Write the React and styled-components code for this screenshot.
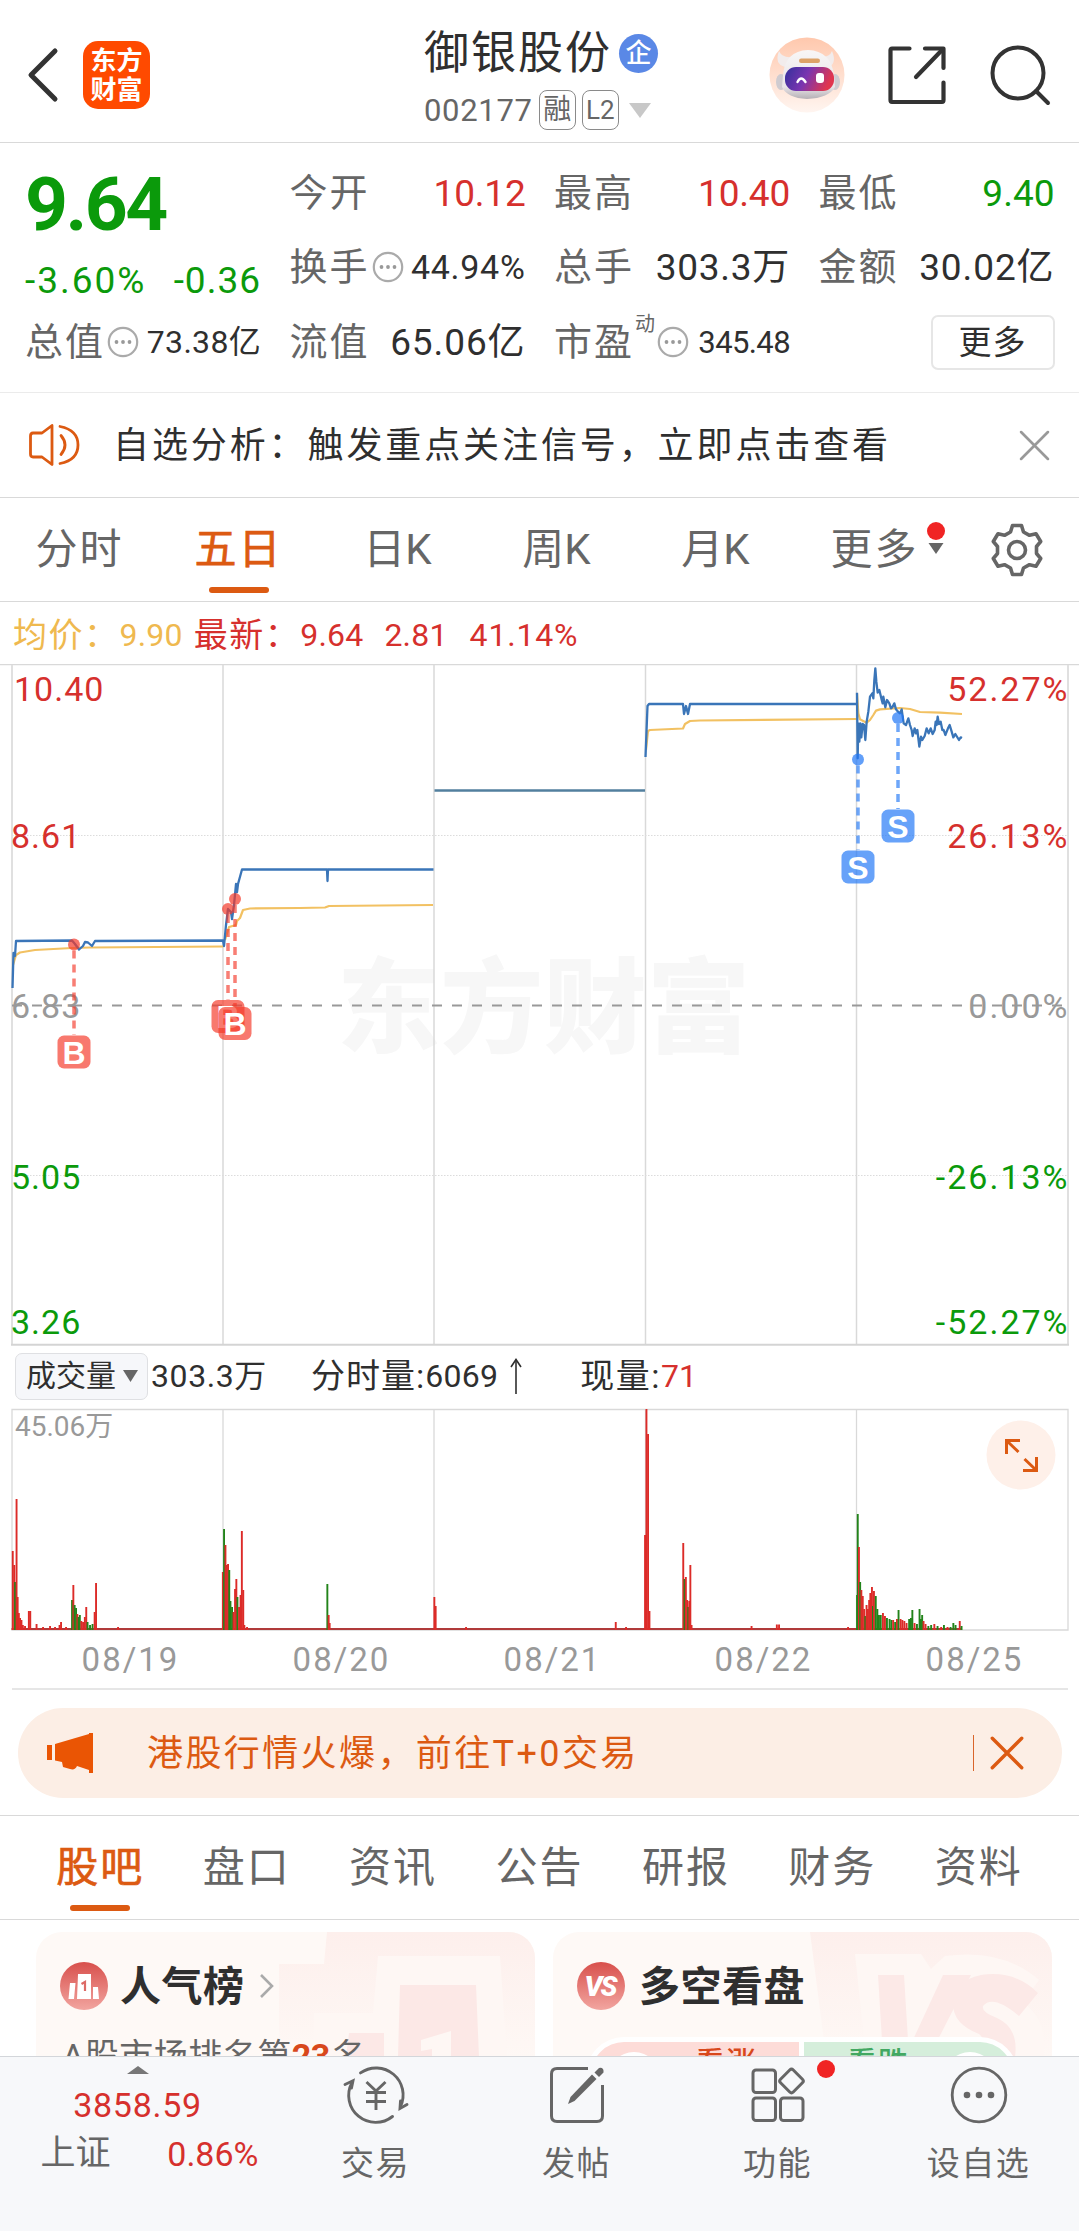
import React from "react";
import styled, { createGlobalStyle } from "styled-components";

const RED = "#d6302d";
const GREEN = "#0b9a0b";
const ORANGE = "#dc5a12";
const INK = "#2f2f2f";
const GRAY = "#666";
const LINE = "#d9d9d9";

const Global = createGlobalStyle`
  *, *::before, *::after { box-sizing: border-box; }
  body {
    margin: 0;
    background: #fff;
    font-family: Roboto, "Noto Sans CJK SC", sans-serif;
    color: ${INK};
  }
  svg { display: block; flex: none; }
`;

const Page = styled.div`
  display: flex;
  flex-direction: column;
  width: 1079px;
  height: 2231px;
  overflow: hidden;
  background: #fff;
`;

const Text = styled.span`
  font-size: ${(p) => p.$size || 36}px;
  line-height: 1;
  color: ${(p) => p.$color || INK};
  font-weight: ${(p) => p.$weight || 400};
  letter-spacing: ${(p) => p.$ls || 0}px;
  margin-left: ${(p) => p.$ml || 0}px;
  margin-top: ${(p) => p.$mt || 0}px;
  white-space: nowrap;
`;

/* ---------- header ---------- */
const Header = styled.header`
  display: grid;
  grid-template-columns: 424px 1fr auto;
  height: 143px;
  flex: none;
  border-bottom: 1px solid ${LINE};
`;
const HeaderLeft = styled.div`
  display: flex;
  align-items: center;
  gap: 24px;
  padding: 8px 0 0 27px;
`;
const Logo = styled.div`
  display: flex;
  flex-direction: column;
  align-items: center;
  justify-content: center;
  gap: 3px;
  width: 67px;
  height: 68px;
  border-radius: 15px;
  background: #ff4a00;
`;
const TitleBlock = styled.div`
  display: flex;
  flex-direction: column;
  gap: 12px;
  padding-top: 28px;
`;
const TitleRow = styled.div`
  display: flex;
  align-items: center;
  height: 50px;
`;
const CodeRow = styled.div`
  display: flex;
  align-items: center;
  gap: 6px;
  height: 40px;
`;
const CompanyBadge = styled.span`
  display: flex;
  align-items: center;
  justify-content: center;
  width: 39px;
  height: 39px;
  margin-left: 7px;
  border-radius: 50%;
  background: #5a88e6;
`;
const Tag = styled.span`
  display: flex;
  align-items: center;
  justify-content: center;
  width: 37px;
  height: 40px;
  border: 1.5px solid #8a8a8a;
  border-radius: 8px;
`;
const HeaderRight = styled.div`
  display: flex;
  align-items: center;
  gap: 42px;
  padding: 7px 28px 0 0;
`;

/* ---------- quote ---------- */
const Quote = styled.section`
  display: grid;
  grid-template-columns: repeat(4, 236px);
  grid-template-rows: 74px 74px 76px;
  column-gap: 28.5px;
  padding: 13px 0 0 25px;
  height: 250px;
  flex: none;
  border-bottom: 1px solid #ebebeb;
`;
const Cell = styled.div`
  display: flex;
  align-items: center;
  justify-content: space-between;
  padding-top: ${(p) => p.$drop || 0}px;
`;
const Label = styled.div`
  display: flex;
  align-items: center;
  gap: 2px;
`;
const Sup = styled.span`
  align-self: flex-start;
  font-size: 20px;
  line-height: 1;
  margin: -9px 0 0 -1px;
  color: ${GRAY};
`;
const MoreButton = styled.button`
  width: 124px;
  height: 55px;
  margin-left: auto;
  padding: 0;
  border: 2px solid #e6e6e6;
  border-radius: 7px;
  background: #fff;
  font: 400 33px/1 Roboto, "Noto Sans CJK SC", sans-serif;
  letter-spacing: 1px;
  color: ${INK};
`;

/* ---------- notice ---------- */
const Notice = styled.section`
  display: flex;
  align-items: center;
  height: 105px;
  flex: none;
  padding: 0 29px 0 28px;
  border-bottom: 1px solid ${LINE};
`;
const Grow = styled.div`
  flex: 1;
`;

/* ---------- tabs ---------- */
const Tabs = styled.nav`
  display: grid;
  grid-template-columns: ${(p) => p.$cols};
  height: ${(p) => p.$h}px;
  flex: none;
  padding: 0 ${(p) => p.$pad || 0}px;
  border-bottom: 1px solid ${LINE};
`;
const Tab = styled.div`
  display: grid;
  grid-template-rows: ${(p) => p.$top}px 6px;
  justify-items: center;
  align-items: center;
  font-size: 42px;
  line-height: 1;
  letter-spacing: ${(p) => p.$ls ?? 2}px;
  white-space: nowrap;
  color: ${(p) => (p.$active ? ORANGE : GRAY)};
  -webkit-text-stroke: ${(p) => (p.$active ? "0.7px" : "0")};
`;
const Bar = styled.i`
  width: 60px;
  height: 6px;
  border-radius: 3px;
  background: ${ORANGE};
`;
const TabLabel = styled.span`
  position: relative;
  padding-top: ${(p) => p.$shift || 0}px;
`;
const TabMark = styled.span`
  position: absolute;
  left: 100%;
  top: 0;
  margin-left: 7px;
`;

/* ---------- charts ---------- */
const Info = styled.div`
  display: flex;
  align-items: center;
  height: 62px;
  flex: none;
  padding: 4px 0 0 13px;
`;
const VolumeBar = styled.div`
  display: flex;
  align-items: center;
  height: 62px;
  flex: none;
  padding: 0 0 2px 15px;
`;
const Select = styled.div`
  display: flex;
  align-items: center;
  gap: 7px;
  width: 133px;
  height: 47px;
  padding-left: 10px;
  border: 1px solid #dfe0e3;
  border-radius: 7px;
  background: #f6f7fa;
`;
const Dates = styled.div`
  display: grid;
  grid-template-columns: repeat(5, 211px);
  align-items: center;
  justify-items: center;
  height: 58px;
  flex: none;
  margin: 0 11px 0 12px;
  padding: 0 0 2px 13px;
  border-bottom: 2px solid #e6e6e6;
`;

/* ---------- promo ---------- */
const Promo = styled.div`
  display: flex;
  align-items: center;
  height: 90px;
  flex: none;
  margin: 18px 17px 17px 18px;
  padding: 0 38px 0 29px;
  border-radius: 45px;
  background: #fceee5;
`;
const PromoRule = styled.i`
  width: 1.5px;
  height: 36px;
  margin-right: 16px;
  background: #d9652b;
`;
const PromoWrap = styled.div`
  flex: none;
  border-bottom: 1px solid ${LINE};
`;

/* ---------- cards ---------- */
const Cards = styled.section`
  display: flex;
  gap: 18px;
  height: 136px;
  flex: none;
  padding: 12px 0 0 36px;
  overflow: hidden;
`;
const Card = styled.article`
  position: relative;
  width: 499px;
  height: 240px;
  border-radius: 26px;
  background: #fef9f6;
  overflow: hidden;
`;
const CardArt = styled.svg`
  position: absolute;
  inset: 0;
`;
const CardHead = styled.div`
  position: relative;
  display: flex;
  align-items: center;
  padding: 30px 0 0 24px;
`;
const CardLine = styled.div`
  position: relative;
  padding: 29px 0 0 26px;
  white-space: nowrap;
  line-height: 1;
`;
const Vote = styled.div`
  position: relative;
  display: flex;
  gap: 5px;
  width: 432px;
  height: 76px;
  margin: 27px 0 0 33px;
  padding: 5px;
  border-radius: 38px;
  background: #fff;
`;
const Side = styled.div`
  display: flex;
  flex: 1;
  flex-direction: ${(p) => (p.$down ? "row-reverse" : "row")};
  justify-content: space-between;
  align-items: flex-start;
  padding: ${(p) => (p.$down ? "6px 17px 0 43px" : "6px 42px 0 17px")};
  border-radius: ${(p) => (p.$down ? "0 33px 33px 0" : "33px 0 0 33px")};
  background: ${(p) => (p.$down ? "#d5eedb" : "#fddcd8")};
`;
const Knob = styled.i`
  width: 52px;
  height: 52px;
  margin-top: 4px;
  border-radius: 50%;
  background: #fff;
`;

/* ---------- bottom bar ---------- */
const Bottom = styled.footer`
  display: grid;
  grid-template-columns: 275px repeat(4, 201px);
  height: 175px;
  flex: none;
  border-top: 1.5px solid #d3d6da;
  background: #f7f8fa;
`;
const IndexBox = styled.div`
  display: flex;
  flex-direction: column;
  align-items: center;
  padding: 9px 0 0 0;
`;
const IndexRow = styled.div`
  display: flex;
  align-items: center;
  justify-content: space-between;
  width: 218px;
  margin: 14px 0 0 24px;
`;
const Action = styled.div`
  position: relative;
  display: flex;
  flex-direction: column;
  align-items: center;
  gap: 22px;
  padding-top: 8px;
`;
const Dot = styled.i`
  position: absolute;
  left: 140px;
  top: 3px;
  width: 18px;
  height: 18px;
  border-radius: 50%;
  background: #f02424;
`;

/* ---------- icons ---------- */
const BackIcon = () => (
  <svg width="32" height="56" viewBox="0 0 32 56" fill="none" stroke="#333" strokeWidth="5" strokeLinecap="round" strokeLinejoin="round">
    <path d="M28 4 L4 28 L28 52" />
  </svg>
);
const RobotIcon = () => (
  <svg width="76" height="76" viewBox="0 0 76 76">
    <defs>
      <linearGradient id="halo" x1="0" y1="0" x2="0" y2="1">
        <stop offset="0" stopColor="#ffc8ad" />
        <stop offset="1" stopColor="#fff5f0" />
      </linearGradient>
      <linearGradient id="visor" x1="0" y1="0" x2="1" y2="0.25">
        <stop offset="0" stopColor="#33309c" />
        <stop offset="0.5" stopColor="#7a35b0" />
        <stop offset="1" stopColor="#e0364f" />
      </linearGradient>
      <linearGradient id="shell" x1="0" y1="0" x2="0" y2="1">
        <stop offset="0" stopColor="#f8f6f6" />
        <stop offset="0.75" stopColor="#e9e5e8" />
        <stop offset="1" stopColor="#b5b0b5" />
      </linearGradient>
    </defs>
    <circle cx="38" cy="38" r="37.5" fill="url(#halo)" />
    <path d="M10 14 Q5 27 16 30 L23 20 Q13 21 10 14 Z" fill="#f2ecec" />
    <path d="M63 14 Q68 26 60 30 L52 20 Q61 20 63 14 Z" fill="#f2ecec" />
    <ellipse cx="12" cy="45" rx="5" ry="8" fill="#cfcbd0" />
    <ellipse cx="66" cy="45" rx="5" ry="8" fill="#cfcbd0" />
    <path d="M14 38 Q16 14 39 13 Q62 14 65 38 L66 50 Q60 61 38 62 Q18 61 13 50 Z" fill="url(#shell)" />
    <rect x="30" y="21.500" width="21" height="4.500" rx="2.200" fill="#dda268" />
    <rect x="16" y="30" width="49" height="24" rx="11" fill="url(#visor)" />
    <path d="M28.500 45 Q32 38 36.500 45" fill="none" stroke="#fff" strokeWidth="2.400" strokeLinecap="round" />
    <rect x="47" y="36" width="8" height="10" rx="3" fill="#fff" />
  </svg>
);
const ShareIcon = () => (
  <svg width="60" height="60" viewBox="0 0 60 60" fill="none" stroke="#333" strokeWidth="4.200" strokeLinecap="round" strokeLinejoin="round">
    <path d="M22.500 3.500 H5 Q3.500 3.500 3.500 5 V55 Q3.500 57 5 57 H55 Q56.500 57 56.500 55 V37.500" />
    <path d="M38 3.500 H56.500 V23" />
    <path d="M55 5 L29 32" />
  </svg>
);
const SearchIcon = () => (
  <svg width="62" height="62" viewBox="0 0 62 62" fill="none" stroke="#333" strokeWidth="4" strokeLinecap="round">
    <circle cx="29" cy="29" r="25.500" />
    <path d="M47 47 L59 59" />
  </svg>
);
const MoreDots = () => (
  <svg width="32" height="32" viewBox="0 0 32 32">
    <circle cx="16" cy="16" r="14.200" fill="none" stroke="#aaa" strokeWidth="2.200" />
    <g fill="#999">
      <circle cx="9.500" cy="16" r="1.900" />
      <circle cx="16" cy="16" r="1.900" />
      <circle cx="22.500" cy="16" r="1.900" />
    </g>
  </svg>
);
const SpeakerIcon = () => (
  <svg width="52" height="44" viewBox="0 0 52 44" fill="none" stroke={ORANGE} strokeWidth="2.800" strokeLinejoin="round" strokeLinecap="round">
    <path d="M24 2.500 L14 10 H5 Q2.500 10 2.500 13 V31 Q2.500 34 5 34 H14 L24 41.500 Z" />
    <path d="M33 12.500 Q41 22 33 31.500" />
    <path d="M32 3.500 Q50 7 50 22 Q50 37 32 40.500" />
  </svg>
);
const CloseIcon = ({ size, color, w }) => (
  <svg width={size} height={size} viewBox="0 0 30 30" fill="none" stroke={color} strokeWidth={w} strokeLinecap="round">
    <path d="M2 2 L28 28 M28 2 L2 28" />
  </svg>
);
const Triangle = ({ w, h, color, up }) => (
  <svg width={w} height={h} viewBox="0 0 10 10" preserveAspectRatio="none">
    <path d={up ? "M0 10 L5 0 L10 10 Z" : "M0 0 H10 L5 10 Z"} fill={color} />
  </svg>
);
const GearIcon = () => (
  <svg width="54" height="54" viewBox="0 0 54 54" fill="none" stroke={GRAY} strokeWidth="3.600" strokeLinejoin="round">
    <path d="M22.500 2.500 H31.500 L33.500 9 L39.500 12.300 L46 10.700 L50.700 18.500 L46.500 23.500 V30.500 L50.700 35.500 L46 43.300 L39.500 41.700 L33.500 45 L31.500 51.500 H22.500 L20.500 45 L14.500 41.700 L8 43.300 L3.300 35.500 L7.500 30.500 V23.500 L3.300 18.500 L8 10.700 L14.500 12.300 L20.500 9 Z" />
    <circle cx="27" cy="27" r="8.500" />
  </svg>
);
const HornIcon = () => (
  <svg width="46" height="40" viewBox="0 0 46 40" fill="#ea5504">
    <rect x="0" y="12" width="5" height="15" />
    <path d="M8 11 L42 1 V0 H46 V40 H42 V37 L30 33 Q28 37.500 23 36 L16 34 L15 29 L8 27.500 Z" />
  </svg>
);
const TradeIcon = () => (
  <svg width="66" height="60" viewBox="0 0 66 60" fill="none" stroke={GRAY} strokeWidth="2.900" strokeLinecap="round">
    <path d="M17.500 7.900 A27 27 0 0 1 57.500 41.500" />
    <path d="M64 39.500 L57 43.500 L57.500 36" />
    <path d="M49.500 51.500 A27 27 0 0 1 8.800 17.800" />
    <path d="M2 19.500 L10 15.800 L8.500 23" />
    <path d="M23.500 17 L33 26 L42.500 17 M23 27.500 H43 M23 36.500 H43 M33 26 V45" strokeLinecap="butt" />
  </svg>
);
const PostIcon = () => (
  <svg width="58" height="60" viewBox="0 0 58 60" fill="none" stroke={GRAY} strokeWidth="3">
    <path d="M40 3.500 H9 Q3.500 3.500 3.500 9 V51 Q3.500 56.500 9 56.500 H49 Q54.500 56.500 54.500 51 V20" />
    <path d="M20 39 L22.500 32 L44 9.500 L48.500 14 L26.500 36 Z" fill={GRAY} stroke="none" />
    <path d="M46.500 7.500 L51 3 Q56 2 55.500 7.500 L51 12 Z" fill={GRAY} stroke="none" />
  </svg>
);
const AppsIcon = () => (
  <svg width="54" height="60" viewBox="0 0 54 60" fill="none" stroke={GRAY} strokeWidth="3">
    <rect x="2" y="5" width="22.500" height="22.500" rx="3" />
    <rect x="2" y="33" width="22.500" height="22.500" rx="3" />
    <rect x="29.500" y="33" width="22.500" height="22.500" rx="3" />
    <rect x="31.500" y="7" width="18" height="18" rx="2.500" transform="rotate(45 40.500 16)" />
  </svg>
);
const OptionsIcon = () => (
  <svg width="60" height="60" viewBox="0 0 60 60">
    <circle cx="30" cy="30" r="26.800" fill="none" stroke={GRAY} strokeWidth="2.800" />
    <g fill={GRAY}>
      <circle cx="18" cy="30" r="3.300" />
      <circle cx="30" cy="30" r="3.300" />
      <circle cx="42" cy="30" r="3.300" />
    </g>
  </svg>
);

/* ---------- price chart data ---------- */
const zoomed = (pts) => pts.map(([x, y]) => [840 + x / 3, 650 + y / 3]);
const line = (pts) => pts.map((p) => p.join(",")).join(" ");

const PRICE = [
  [[12.5, 988], [13.5, 953], [15, 956], [16, 941], [72, 940.5], [75, 944], [79, 949.5], [83, 946], [85, 942], [88, 942.5], [92, 946], [95, 941], [223, 940.5], [224, 946], [226, 925], [228, 909], [231, 912], [232, 919], [234, 905], [236, 884], [237, 892], [238, 884], [242, 869.5], [327, 869.5], [327.5, 881], [328, 869.5], [433.5, 869.5]],
  [[645.5, 757], [647.5, 706], [649, 704], [683, 704], [684, 714], [686, 706], [688, 714], [690, 704], [857, 704]],
  zoomed([[51, 128], [53, 325], [55, 220], [58, 275], [61, 220], [64, 262], [68, 222], [72, 225], [76, 270], [80, 215], [85, 185], [90, 140], [97, 130], [100, 145], [103, 90], [106, 55], [109, 95], [113, 128], [118, 120], [124, 145], [128, 160], [130, 140], [136, 172], [141, 150], [148, 160], [153, 175], [157, 172], [163, 160], [168, 178], [174, 185], [180, 190], [185, 178], [191, 220], [198, 225], [205, 205], [210, 225], [215, 240], [218, 258], [224, 235], [228, 250], [232, 240], [238, 290], [243, 260], [247, 270], [254, 258], [260, 235], [266, 250], [272, 235], [278, 252], [284, 240], [287, 215], [290, 225], [293, 200], [297, 222], [302, 215], [307, 240], [311, 240], [316, 255], [324, 235], [329, 225], [335, 245], [340, 262], [346, 252], [357, 270], [362, 262], [366, 264]]),
];
const AVERAGE = [
  [[13, 965], [16, 955], [20, 952.5], [35, 950], [72, 948], [90, 947.5], [223, 946.5]],
  [[225, 940], [229, 927], [236, 925], [237, 921], [240, 918], [243, 910], [250, 908.5], [300, 908], [325, 907.5], [329, 906], [433, 905]],
  [[646, 750], [648, 731], [650, 730], [683, 728.5], [685, 724], [690, 721], [700, 720.5], [857, 719]],
  zoomed([[51, 130], [55, 190], [60, 208], [68, 212], [80, 218], [90, 210], [100, 195], [108, 182], [120, 178], [180, 174], [210, 177], [240, 186], [300, 188], [366, 192]]),
];
const TRADES = [
  { kind: "B", x: 74, dot: 944.5, y: 1052 },
  { kind: "B", x: 228, dot: 909, y: 1016.5 },
  { kind: "B", x: 235, dot: 899, y: 1023.5 },
  { kind: "S", x: 858, dot: 759.5, y: 867 },
  { kind: "S", x: 898, dot: 718, y: 826 },
];
const DAY_X = [223, 434, 645.5, 856.5];
const AXIS = [
  ["10.40", "52.27%", 689, RED],
  ["8.61", "26.13%", 836, RED],
  ["6.83", "0.00%", 1006, "#999"],
  ["5.05", "-26.13%", 1177, GREEN],
  ["3.26", "-52.27%", 1322, GREEN],
];

const PriceChart = () => (
  <svg width="1079" height="682" viewBox="0 664 1079 682" fontFamily='Roboto, "Noto Sans CJK SC", sans-serif'>
    <text x="337" y="1045" fontSize="103" fontWeight="900" fill="#f7f7f7" fontFamily='"Noto Sans CJK SC", sans-serif' textLength="413">东方财富</text>
    <g stroke={LINE} strokeWidth="1.500">
      {DAY_X.map((x) => <path key={x} d={`M${x} 665 V1345`} />)}
    </g>
    <g stroke="#dcdcdc" strokeWidth="1.200" strokeDasharray="1.500 1.500">
      <path d="M12 835.500 H1068" />
      <path d="M12 1175.500 H1068" />
    </g>
    <path d="M0 664.700 H1079" stroke={LINE} strokeWidth="1.300" />
    <path d="M12 665 V1345 M1068 665 V1345" stroke="#e0e0e0" strokeWidth="2" />
    <path d="M11 1344.800 H1069" stroke="#d4d4d4" strokeWidth="2" />
    <path d="M12 1005.500 H1068" stroke="#999" strokeWidth="1.800" strokeDasharray="10 10" />
    {AXIS.map(([left, right, y, color], i) => (
      <g key={left} fill={color} fontSize="34">
        <text x={i ? 11 : 14} y={y + 12} letterSpacing="1">{left}</text>
        <text x="1069.500" y={y + 12} textAnchor="end" letterSpacing="2">{right}</text>
      </g>
    ))}
    <g fill="none" strokeLinejoin="round">
      {AVERAGE.map((pts, i) => <polyline key={i} points={line(pts)} stroke="#f2c162" strokeWidth="2.200" />)}
      {PRICE.map((pts, i) => <polyline key={i} points={line(pts)} stroke="#3a75b8" strokeWidth="2.300" />)}
      <path d="M434.500 790.500 H645" stroke="#527f9e" strokeWidth="2.300" />
    </g>
    {TRADES.map(({ kind, x, dot, y }) => {
      const color = kind === "B" ? "#f4392a" : "#1f76f6";
      return (
        <g key={x}>
          <path d={`M${x} ${dot + 6} V${y - 17}`} stroke={color} strokeOpacity="0.650" strokeWidth="3.500" strokeDasharray="8 6" />
          <circle cx={x} cy={dot} r="6" fill={color} fillOpacity="0.700" />
          <rect x={x - 16.5} y={y - 16.5} width="33" height="33" rx="6.500" fill={color} fillOpacity="0.680" />
          <text x={x} y={y + 11.5} fontSize="32" fontWeight="700" fontFamily='"Liberation Sans", sans-serif' fill="#fff" textAnchor="middle">{kind}</text>
        </g>
      );
    })}
  </svg>
);

/* ---------- volume chart data: [x, top, side] ---------- */
const DAY5 = [[-0.5, 1594, 0], [0.2, 1513, 0], [1.4, 1546, 1], [2.6, 1581, 0], [3.8, 1589, 1], [5.2, 1595, 1], [6.6, 1608, 1], [7.8, 1615, 0], [9, 1604, 1], [10.4, 1608, 1], [11.6, 1599, 1], [12.8, 1592, 1], [14.4, 1586, 1], [15.4, 1605, 0], [16.4, 1590, 1], [18.2, 1595, 0], [19.8, 1608, 0], [21.4, 1614, 0], [23.2, 1614, 0], [25.4, 1612, 1], [27.4, 1615, 1], [29.4, 1617, 0], [32, 1618, 0], [33.8, 1619, 0], [35.6, 1619, 1], [37.6, 1621, 0], [39.4, 1618, 1], [41, 1609, 0], [43, 1618, 1], [44.8, 1619, 1], [46.8, 1620, 1], [49, 1622, 1], [51.6, 1618, 0], [53.4, 1617, 0], [54.8, 1609, 0], [57, 1622, 1], [59.4, 1623, 0], [62, 1608, 0], [63.4, 1618, 0], [64.6, 1614, 0], [66, 1620, 1], [68, 1623, 1], [70.8, 1625, 0], [73.6, 1624, 0], [76.8, 1623, 1], [80, 1625, 0], [83.6, 1626, 1], [86.4, 1624, 0], [90, 1626, 1], [93, 1626, 0], [95.8, 1622, 0], [98, 1624, 0], [102.2, 1620, 1], [104, 1625, 0]].map(([x, y, s]) => [857.5 + x, y, s]);
const VOLUME = [
  [12.7, 1550, 1], [14.2, 1564, 1], [15, 1581, 0], [16.5, 1498, 1], [17.6, 1596, 1], [18.8, 1612, 1], [20, 1617, 1], [21.4, 1619, 1], [22.8, 1624, 1], [25, 1625, 1], [28.8, 1610, 1], [30.2, 1610, 1], [36.5, 1623, 1], [43, 1626, 1], [50, 1625, 1], [55, 1626, 1], [59.5, 1624, 1], [61, 1621, 1], [66, 1626, 1],
  [72, 1599, 0], [73.3, 1584, 1], [74.6, 1604, 0], [76, 1607, 0], [77.3, 1613, 1], [78.6, 1616, 0], [79.8, 1614, 0], [81.3, 1620, 1], [83, 1621, 1], [84.8, 1616, 1], [86.2, 1606, 1], [87.5, 1621, 0], [90, 1624, 0], [92.5, 1623, 0], [94.6, 1611, 1], [96, 1582, 1], [118, 1626, 1],
  [222.8, 1571, 1], [224, 1528, 0], [225.4, 1544, 1], [226.7, 1564, 1], [228, 1563, 1], [229.2, 1569, 0], [230.4, 1600, 0], [232, 1606, 0], [233.5, 1611, 1], [235, 1588, 1], [236.3, 1578, 1], [237.4, 1596, 0], [239, 1606, 1], [240.5, 1594, 1], [241.8, 1530, 1], [243.2, 1589, 1], [244.3, 1624, 1], [247, 1626, 1],
  [327.3, 1583, 0], [328.6, 1614, 1], [329.6, 1622, 1], [434.3, 1596, 1], [435.6, 1605, 1], [466, 1626, 1], [615.7, 1621, 1], [626, 1626, 1],
  [645, 1534, 1], [646.4, 1408, 1], [648, 1433, 1], [649.4, 1610, 1], [683.2, 1542, 1], [684.6, 1578, 0], [685.8, 1576, 1], [687.1, 1599, 1], [688.3, 1606, 0], [689.2, 1600, 1], [690.3, 1564, 1], [691.5, 1624, 1], [751.5, 1625, 1], [776.8, 1623.5, 1], [779, 1623.5, 1], [848, 1626, 1],
  ...DAY5,
];
const VolumeChart = () => (
  <svg width="1079" height="224" viewBox="0 1407 1079 224" fontFamily='Roboto, "Noto Sans CJK SC", sans-serif'>
    <g stroke={LINE} strokeWidth="1.300" fill="none">
      {DAY_X.map((x) => <path key={x} d={`M${x} 1408.500 V1629`} />)}
      <path d="M12 1408.500 H1068 V1629 H12 Z" />
    </g>
    <text x="15" y="1435" fontSize="28" fill="#999">45.06万</text>
    <path d="M11.500 1628 H962" stroke="#b03a3a" strokeWidth="2.200" />
    {VOLUME.map(([x, y, up], i) => (
      <rect key={i} x={x - 0.9} y={y} width="1.900" height={1629 - y} fill={up ? "#dc2b28" : "#22831a"} />
    ))}
    <circle cx="1021" cy="1454" r="34.500" fill="#fef0e9" />
    <g fill="none" stroke={ORANGE} strokeWidth="3">
      <path d="M1020 1439.500 H1006.500 V1453 M1007 1440 L1018.500 1451" />
      <path d="M1023 1469.500 H1036.500 V1456 M1036 1469 L1024.500 1458" />
    </g>
  </svg>
);

const Metric = ({ label, value, size = 37, color, dots, sup, ls = 0 }) => (
  <Cell>
    <Label>
      <Text $size={38} $ls={2} $color={GRAY}>{label}</Text>
      {sup && <Sup>{sup}</Sup>}
      {dots && <MoreDots />}
    </Label>
    <Text $size={size} $color={color} $ls={ls}>{value}</Text>
  </Cell>
);

const FEED_TABS = ["股吧", "盘口", "资讯", "公告", "研报", "财务", "资料"];
const ACTIONS = [
  ["交易", TradeIcon],
  ["发帖", PostIcon],
  ["功能", AppsIcon],
  ["设自选", OptionsIcon],
];

export default function App() {
  return (
    <Page>
      <Global />
      <Header>
        <HeaderLeft>
          <BackIcon />
          <Logo>
            <Text $size={26} $weight={700} $color="#fff">东方</Text>
            <Text $size={26} $weight={700} $color="#fff">财富</Text>
          </Logo>
        </HeaderLeft>
        <TitleBlock>
          <TitleRow>
            <Text $size={45} $ls={2}>御银股份</Text>
            <CompanyBadge><Text $size={26} $weight={500} $color="#fff">企</Text></CompanyBadge>
          </TitleRow>
          <CodeRow>
            <Text $size={31} $ls={0.7} $color={GRAY}>002177</Text>
            <Tag><Text $size={28} $color={GRAY}>融</Text></Tag>
            <Tag><Text $size={26} $color={GRAY}>L2</Text></Tag>
            <Text $ml={4}><Triangle w={22} h={15} color="#c8c8c8" /></Text>
          </CodeRow>
        </TitleBlock>
        <HeaderRight>
          <RobotIcon />
          <ShareIcon />
          <SearchIcon />
        </HeaderRight>
      </Header>

      <Quote>
        <Cell $drop={22}><Text $size={75} $weight={700} $color={GREEN} $ls={-2.5}>9.64</Text></Cell>
        <Metric label="今开" value="10.12" color={RED} ls={-0.2} />
        <Metric label="最高" value="10.40" color={RED} ls={-0.2} />
        <Metric label="最低" value="9.40" color={GREEN} />
        <Cell $drop={26}>
          <Text $size={37} $color={GREEN} $ls={2}>-3.60%</Text>
          <Text $size={37} $color={GREEN} $ls={1}>-0.36</Text>
        </Cell>
        <Metric label="换手" value="44.94%" size={34} dots ls={0.7} />
        <Metric label="总手" value="303.3万" ls={0.7} />
        <Metric label="金额" value="30.02亿" ls={0.9} />
        <Metric label="总值" value="73.38亿" size={32} dots ls={0.3} />
        <Metric label="流值" value="65.06亿" ls={0.9} />
        <Metric label="市盈" value="345.48" size={31} dots sup="动" ls={-0.6} />
        <Cell><MoreButton>更多</MoreButton></Cell>
      </Quote>

      <Notice>
        <SpeakerIcon />
        <Text $size={36} $ls={2.9} $ml={33} $mt={2}>自选分析：触发重点关注信号，立即点击查看</Text>
        <Grow />
        <CloseIcon size={31} color="#999" w={2.6} />
      </Notice>

      <Tabs $cols="repeat(6, 159px) 125px" $h={104}>
        <Tab $top={89}><TabLabel $shift={14}>分时</TabLabel></Tab>
        <Tab $top={89} $active><TabLabel $shift={14}>五日</TabLabel><Bar /></Tab>
        <Tab $top={89} $ls={0}><TabLabel $shift={14}>日K</TabLabel></Tab>
        <Tab $top={89} $ls={0}><TabLabel $shift={14}>周K</TabLabel></Tab>
        <Tab $top={89} $ls={0}><TabLabel $shift={14}>月K</TabLabel></Tab>
        <Tab $top={89}>
          <TabLabel $shift={14}>
            更多
            <TabMark>
              <svg width="20" height="40" viewBox="0 0 20 40">
                <circle cx="10" cy="16" r="9" fill="#f02424" />
                <path d="M2.500 28 H17.500 L10 39 Z" fill={GRAY} />
              </svg>
            </TabMark>
          </TabLabel>
        </Tab>
        <Tab $top={103}><GearIcon /></Tab>
      </Tabs>

      <Info>
        <Text $size={34} $ls={1.5} $color="#efb94f">均价：</Text>
        <Text $size={32} $ls={0.2} $color="#efb94f">9.90</Text>
        <Text $size={34} $ls={1.5} $color={RED} $ml={11}>最新：</Text>
        <Text $size={32} $ls={0.2} $color={RED}>9.64</Text>
        <Text $size={32} $ls={0.2} $color={RED} $ml={21}>2.81</Text>
        <Text $size={32} $ls={0.8} $color={RED} $ml={22}>41.14%</Text>
      </Info>
      <PriceChart />

      <VolumeBar>
        <Select>
          <Text $size={30}>成交量</Text>
          <Triangle w={15} h={12} color={GRAY} />
        </Select>
        <Text $size={32} $ls={0.6} $ml={3}>303.3万</Text>
        <Text $size={34} $ls={1} $ml={44}>分时量:</Text>
        <Text $size={32} $ls={0.3}>6069</Text>
        <svg width="14" height="36" viewBox="0 0 14 36" fill="none" stroke={INK} strokeWidth="1.600" style={{ marginLeft: 11 }}>
          <path d="M7 36 V1.500" />
          <path d="M2 9 L7 1.500 L12 9" />
        </svg>
        <Text $size={34} $ls={1.5} $ml={57}>现量:</Text>
        <Text $size={32} $color={RED}>71</Text>
      </VolumeBar>
      <VolumeChart />
      <Dates>
        {["08/19", "08/20", "08/21", "08/22", "08/25"].map((d) => (
          <Text key={d} $size={33} $ls={2} $color="#999">{d}</Text>
        ))}
      </Dates>

      <PromoWrap>
        <Promo>
          <HornIcon />
          <Text $size={36} $ls={2.4} $ml={54} $mt={2} $color={ORANGE}>港股行情火爆，前往T+0交易</Text>
          <Grow />
          <PromoRule />
          <CloseIcon size={34} color={ORANGE} w={3} />
        </Promo>
      </PromoWrap>

      <Tabs $cols="repeat(7, 1fr)" $h={104} $pad={27}>
        {FEED_TABS.map((t, i) => (
          <Tab key={t} $top={89} $active={i === 0}>
            <TabLabel $shift={14}>{t}</TabLabel>
            {i === 0 && <Bar />}
          </Tab>
        ))}
      </Tabs>

      <Cards>
        <Card>
          <CardArt width="499" height="125" viewBox="0 0 499 125">
            <defs>
              <linearGradient id="fade" x1="0" y1="0" x2="0" y2="1">
                <stop offset="0" stopColor="#fdefec" />
                <stop offset="1" stopColor="#fef8f5" />
              </linearGradient>
              <linearGradient id="disc" x1="0" y1="0" x2="0" y2="1">
                <stop offset="0" stopColor="#d8504c" />
                <stop offset="1" stopColor="#f2a5a0" />
              </linearGradient>
            </defs>
            <path d="M291 0 H499 V125 H243 V32 H288 Z" fill="url(#fade)" />
            <path d="M342 24 H464 L471 125 H278 V81 H337 Z" fill="#fef7f4" />
            <path d="M364 53 H440 L443 125 H362 Z" fill="#fce8e6" />
            <path d="M313 101 H348 V125 H310 Z" fill="#fce8e6" />
            <path d="M385 108 L415 99 V125 H396 V117 L385 119 Z" fill="#fef7f4" />
          </CardArt>
          <CardHead>
            <svg width="48" height="48" viewBox="0 0 48 48">
              <circle cx="24" cy="24" r="24" fill="url(#disc)" />
              <path d="M10 21 H15.500 L14 37 H8.500 Z M18 12 H31 V37 H17 Z M33 25 H38 L39 37 H33 Z" fill="#fff" />
              <path d="M21.500 22 L25 20 V29" fill="none" stroke="#dd6a66" strokeWidth="2.200" />
            </svg>
            <Text $size={41} $weight={700} $ls={0.5} $ml={12} $mt={2}>人气榜</Text>
            <svg width="16" height="26" viewBox="0 0 16 26" fill="none" stroke="#aaa" strokeWidth="2.600" style={{ marginLeft: 14 }}>
              <path d="M2 2 L13 13 L2 24" />
            </svg>
          </CardHead>
          <CardLine>
            <Text $size={34} $color={GRAY} $ls={0.5}>A股市场排名第</Text>
            <Text $size={34} $weight={700} $color="#d8481c" $ls={-0.5}>23</Text>
            <Text $size={34} $color={GRAY} $ml={2}>名</Text>
          </CardLine>
        </Card>
        <Card>
          <CardArt width="499" height="125" viewBox="0 0 499 125">
            <path d="M257 0 H499 V125 H273 Z" fill="url(#fade)" />
            <path d="M302 22 H368 L378 37 L392 24 Q450 16 486 48 L470 70 Q496 90 490 125 H313 Z" fill="#fef7f4" />
            <path d="M325 43 H351 L356 125 H330 Z" fill="#fce9e7" />
            <path d="M390 43 H418 L376 125 H352 Z" fill="#fce9e7" />
            <path d="M485 61 Q462 38 428 43 Q398 50 400 72 Q400 92 426 102 Q434 108 430 125 H462 Q466 96 444 86 Q428 80 430 74 Q440 62 466 84 Z" fill="#fce9e7" />
          </CardArt>
          <CardHead>
            <svg width="48" height="48" viewBox="0 0 48 48">
              <circle cx="24" cy="24" r="24" fill="url(#disc)" />
              <text x="23" y="34" textAnchor="middle" fontFamily="Roboto, sans-serif" fontSize="28" fontWeight="900" fontStyle="italic" letterSpacing="-2" fill="#fff">VS</text>
            </svg>
            <Text $size={41} $weight={700} $ls={0.5} $ml={14} $mt={2}>多空看盘</Text>
          </CardHead>
          <Vote>
            <Side>
              <Knob />
              <Text $size={30} $weight={500} $color="#d8481c" $ls={1}>看涨</Text>
            </Side>
            <Side $down>
              <Knob />
              <Text $size={30} $weight={500} $color="#42a862" $ls={1}>看跌</Text>
            </Side>
          </Vote>
        </Card>
      </Cards>

      <Bottom>
        <IndexBox>
          <Triangle w={22} h={8} color="#777" up />
          <Text $size={34} $ls={0.7} $color={RED} $mt={14}>3858.59</Text>
          <IndexRow>
            <Text $size={35} $color={GRAY}>上证</Text>
            <Text $size={34} $color={RED}>0.86%</Text>
          </IndexRow>
        </IndexBox>
        {ACTIONS.map(([name, Icon]) => (
          <Action key={name}>
            <Icon />
            <Text $size={33} $ls={1.5} $color={GRAY}>{name}</Text>
            {name === "功能" && <Dot />}
          </Action>
        ))}
      </Bottom>
    </Page>
  );
}
